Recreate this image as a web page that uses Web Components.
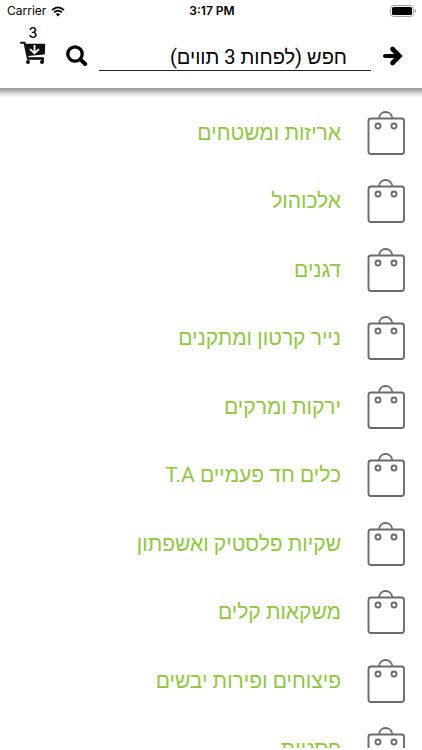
<!DOCTYPE html>
<html lang="he">
<head>
<meta charset="utf-8">
<meta name="viewport" content="width=device-width, initial-scale=1">
<title>קטגוריות</title>
<style>
  html, body { margin: 0; height: 100%; }
  body { background: #fff; color: #000; font-family: Roboto, "Liberation Sans", "DejaVu Sans", sans-serif; }
</style>
</head>
<body>
<shop-screen></shop-screen>

<template id="status-bar">
  <style>
    :host { display: grid; grid-template-columns: 1fr auto 1fr; align-items: center; height: 22px; padding: 0 5px 0 7px; font: 400 12px/22px Inter, sans-serif; }
    .left { display: flex; align-items: center; gap: 5px; }
    time { font-weight: 600; }
    .battery { justify-self: end; }
    svg { display: block; }
  </style>
  <span class="left">Carrier
    <svg width="14" height="11" viewBox="0 0 14 11" aria-hidden="true">
      <path d="M1 4.2Q7-1.4 13 4.2M3 6.4Q7 2.8 11 6.4" fill="none" stroke="#000" stroke-width="1.7"/>
      <path d="M4.7 8.1Q7 6.2 9.3 8.1L7 10.5z"/>
    </svg>
  </span>
  <time>3:17 PM</time>
  <svg class="battery" width="27" height="12" viewBox="0 0 27 12" aria-hidden="true">
    <rect x=".6" y=".6" width="22.8" height="10.8" rx="2.8" fill="none" stroke="#999" stroke-width="1"/>
    <rect x="2" y="2" width="20" height="8" rx="1.5"/>
    <path d="M24.7 4v4c1.7-.5 1.7-3.500 0-4z" fill="#999"/>
  </svg>
</template>

<template id="search-header">
  <style>
    :host { display: block; flex: none; }
    :host::after { content: ""; display: block; height: 10px; background: linear-gradient(#999, #b5b5b5 30%, #e6e6e6 65%, #fff); }
    form { display: flex; height: 66px; margin: 0; padding: 0 18px; align-items: start; }
    button { display: block; border: 0; padding: 0; background: none; color: #000; font: inherit; flex: none; }
    svg { display: block; }
    .cart { width: 30px; padding-top: 3px; }
    .cart span { display: block; font: 500 14px/16px Inter, sans-serif; text-align: center; }
    .find { padding-top: 23px; margin-left: 18px; }
    .next { padding-top: 23px; margin-left: 11px; }
    input { flex: 1; min-width: 0; height: 28px; margin: 21px 0 0 11px; padding: 0 24px; box-sizing: border-box; border: 0; border-bottom: 1px solid #222; border-radius: 0; outline: 0; background: none; color: #000; font: inherit; font-size: 20px; }
    input::placeholder { color: #000; opacity: 1; }
  </style>
  <form>
  <button type="button" class="cart" aria-label="עגלה">
    <span>3</span>
    <svg width="30" height="23" viewBox="0 0 30 23">
      <path d="M3 1.800h3.500l3.300 15.500h15" fill="none" stroke="#111" stroke-width="2" stroke-linecap="round"/>
      <path d="M7.200 2.700H26.500q.8 0 .7.900l-.3 9q0 .8-.9.900L9.500 15z" fill="#111"/>
      <circle cx="10" cy="21" r="2" fill="#111"/><circle cx="24" cy="21" r="2" fill="#111"/>
      <path d="M9 17.800H25v2" fill="none" stroke="#111" stroke-width="2"/>
      <path d="M16.500 4v7.500M12 8.200l4.500 4 4.500-4" fill="none" stroke="#fff" stroke-width="1.800"/>
    </svg>
  </button>
  <button type="submit" class="find" aria-label="חיפוש">
    <svg width="22" height="22" viewBox="0 0 22 22" fill="none" stroke="#000">
      <circle cx="9" cy="9" r="7.200" stroke-width="3.300"/><path d="M14.700 14.700l4.500 4.300" stroke-width="4" stroke-linecap="round"/>
    </svg>
  </button>
  <input type="search" dir="rtl" aria-label="חפש" placeholder="חפש (לפחות 3 תווים)">
  <button type="button" class="next" aria-label="חזרה">
    <svg width="22" height="22" viewBox="0 0 22 22" fill="none" stroke="#000">
      <path d="M3 11H17" stroke-width="4" stroke-linecap="round"/><path d="M10.500 4L17.500 11l-7 7" stroke-width="4.600" stroke-linecap="round"/>
    </svg>
  </button>
  </form>
</template>

<template id="category-item">
  <style>
    :host { display: block; }
    a { display: flex; height: 100%; align-items: center; gap: 25px; padding: 0 16px; color: #8fc740; text-decoration: none; font-size: 21px; line-height: 28px; }
    svg { display: block; flex: none; }
  </style>
  <a href="#">
    <svg width="40" height="46" viewBox="0 0 40 46" fill="none" stroke="#6b6b6b" stroke-width="1.900" aria-hidden="true">
      <rect x="2.500" y="8.500" width="35.500" height="35.500" rx="2.500"/>
      <path d="M13 8.500C13.500-.2 25.500-.2 26.500 8.500"/>
      <circle cx="12" cy="16" r="2.500"/><circle cx="28" cy="16" r="2.500"/>
    </svg>
    <span><slot></slot></span>
  </a>
</template>

<template id="category-list">
  <style>
    :host { display: grid; grid-auto-rows: 69px 68px; align-content: start; flex: 1; min-height: 0; overflow: hidden; direction: rtl; }
  </style>
  <slot></slot>
</template>

<template id="shop-screen">
  <style>
    :host { display: flex; flex-direction: column; height: 100vh; box-sizing: border-box; padding-bottom: 2px; }
  </style>
  <status-bar></status-bar>
  <search-header></search-header>
  <category-list>
    <category-item>אריזות ומשטחים</category-item>
    <category-item>אלכוהול</category-item>
    <category-item>דגנים</category-item>
    <category-item>נייר קרטון ומתקנים</category-item>
    <category-item>ירקות ומרקים</category-item>
    <category-item>כלים חד פעמיים T.A</category-item>
    <category-item>שקיות פלסטיק ואשפתון</category-item>
    <category-item>משקאות קלים</category-item>
    <category-item>פיצוחים ופירות יבשים</category-item>
    <category-item>פסטות</category-item>
  </category-list>
</template>

<script>
  class TemplateElement extends HTMLElement {
    constructor() {
      super();
      const template = document.getElementById(this.localName);
      this.attachShadow({ mode: "open" }).append(template.content.cloneNode(true));
    }
  }
  for (const name of ["status-bar", "search-header", "category-item", "category-list", "shop-screen"]) {
    customElements.define(name, class extends TemplateElement {});
  }
</script>
</body>
</html>
